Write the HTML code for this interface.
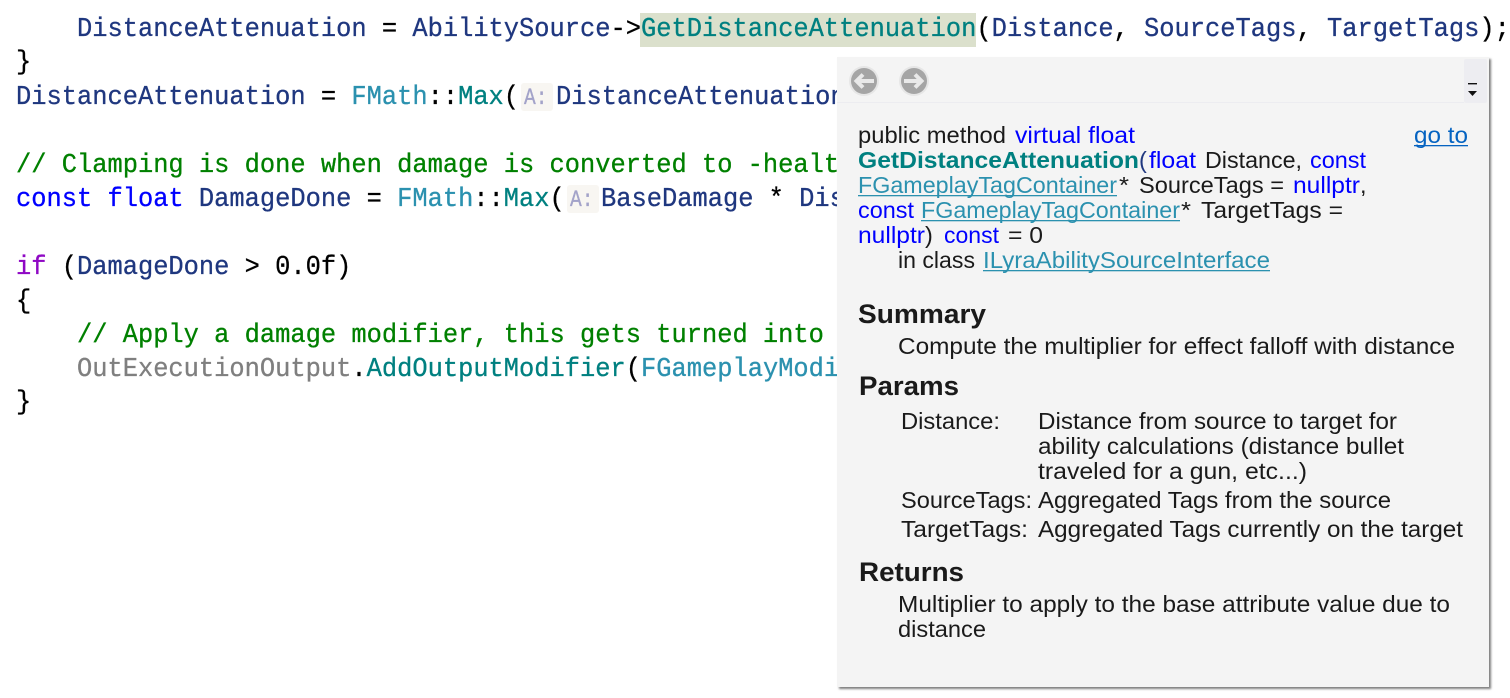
<!DOCTYPE html>
<html><head><meta charset="utf-8"><style>
html,body{margin:0;padding:0;width:1510px;height:698px;overflow:hidden;background:#fff}
.c{position:absolute;font:27px/34px "Liberation Mono",monospace;white-space:pre;transform:scaleX(.9408);transform-origin:0 0;color:#000;-webkit-text-stroke:.3px currentColor}
.n{color:#1f377f}.m{color:#008080}.t{color:#2b91af}.g{color:#008000}.b{color:#0000ff}.p{color:#8f08c4}.o{color:#7f7f7f}
.h{position:absolute;background:#f8f6f2;border-radius:3px;width:32px;height:28px}
.h span{position:absolute;left:3px;top:3px;font:bold 23px/24px "Liberation Mono",monospace;font-weight:normal;color:#a3a3c9;transform:scaleX(.85);transform-origin:0 0;-webkit-text-stroke:.3px #a3a3c9}
#hl{position:absolute;left:640px;top:13px;width:336px;height:34px;background:#dbe0cc}
#pop{position:absolute;left:837px;top:57px;width:652px;height:630px;background:#f4f4f4;box-shadow:2px 2px 2px #7f7f7f}
svg{position:absolute;left:0;top:0}
svg text{font-family:"Liberation Sans",sans-serif;font-size:23.5px;fill:#1a1a1a;white-space:pre}
.bl{fill:#0000ff}.li{fill:#2b91af}.lk{fill:#0563c1}
.hd{font-size:27px;font-weight:bold}
</style></head><body>
<div id="hl"></div>
<div class="c" style="left:16px;top:13px"><span>    </span><span class="n">DistanceAttenuation</span> = <span class="n">AbilitySource</span>-&gt;<span class="m">GetDistanceAttenuation</span>(<span class="n">Distance</span>, <span class="n">SourceTags</span>, <span class="n">TargetTags</span>);</div>
<div class="c" style="left:16px;top:46px">}</div>
<div class="c" style="left:16px;top:81px"><span class="n">DistanceAttenuation</span> = <span class="t">FMath</span>::<span class="m">Max</span>(</div>
<div class="h" style="left:521px;top:83px"><span>A:</span></div>
<div class="c n" style="left:556px;top:81px">DistanceAttenuation, 0.0f);</div>
<div class="c g" style="left:16px;top:149px">// Clamping is done when damage is converted to -health</div>
<div class="c" style="left:16px;top:183px"><span class="b">const</span> <span class="b">float</span> <span class="n">DamageDone</span> = <span class="t">FMath</span>::<span class="m">Max</span>(</div>
<div class="h" style="left:567px;top:185px"><span>A:</span></div>
<div class="c n" style="left:601px;top:183px">BaseDamage <span style="color:#000">*</span> Distance</div>
<div class="c" style="left:16px;top:251px"><span class="p">if</span> (<span class="n">DamageDone</span> &gt; 0.0f)</div>
<div class="c" style="left:16px;top:285px">{</div>
<div class="c g" style="left:16px;top:319px">    // Apply a damage modifier, this gets turned into -health</div>
<div class="c" style="left:16px;top:353px">    <span class="o">OutExecutionOutput</span>.<span class="m">AddOutputModifier</span>(<span class="t">FGameplayModifierEvaluatedData</span></div>
<div class="c" style="left:16px;top:386px">}</div>
<div id="pop"></div>
<svg width="1510" height="698" viewBox="0 0 1510 698">
<rect x="837" y="102" width="627" height="1" fill="#ececf0"/>
<rect x="1464" y="59" width="23" height="44" rx="2" fill="#ededf1"/>
<rect x="1468" y="83" width="9" height="1.4" fill="#111"/>
<path d="M1468 91h9l-4.5 5z" fill="#111"/>
<circle cx="864" cy="81" r="15" fill="#e6e6e6"/><circle cx="864" cy="81" r="13" fill="#a5a5a5"/>
<path d="M874 81H857M863 74.5L856.5 81L863 87.5" fill="none" stroke="#e9e9e9" stroke-width="4"/>
<circle cx="914" cy="81" r="15" fill="#e6e6e6"/><circle cx="914" cy="81" r="13" fill="#a5a5a5"/>
<path d="M904 81H921M915 74.5L921.5 81L915 87.5" fill="none" stroke="#e9e9e9" stroke-width="4"/>

<text x="858" y="143" textLength="148" lengthAdjust="spacingAndGlyphs">public method</text>
<text x="1015" y="143" textLength="120" lengthAdjust="spacingAndGlyphs" class="bl">virtual float</text>
<text x="1414" y="143" textLength="54" lengthAdjust="spacingAndGlyphs" class="lk">go to</text>
<rect x="1414" y="145" width="54" height="1.3" fill="#0563c1"/>

<text x="858" y="168" textLength="281" lengthAdjust="spacingAndGlyphs" style="font-weight:bold;fill:#008080">GetDistanceAttenuation</text>
<text x="1139" y="168" class="bl" style="fill:#1f377f">(</text>
<text x="1149" y="168" textLength="47" lengthAdjust="spacingAndGlyphs" class="bl">float</text>
<text x="1205" y="168" textLength="97" lengthAdjust="spacingAndGlyphs">Distance,</text>
<text x="1310" y="168" textLength="56" lengthAdjust="spacingAndGlyphs" class="bl">const</text>

<text x="858" y="193" textLength="259" lengthAdjust="spacingAndGlyphs" class="li">FGameplayTagContainer</text>
<rect x="858" y="195" width="259" height="1.3" fill="#2b91af"/>
<text x="1119" y="193" textLength="10" lengthAdjust="spacingAndGlyphs">*</text>
<text x="1139" y="193" textLength="145" lengthAdjust="spacingAndGlyphs">SourceTags =</text>
<text x="1293" y="193" textLength="67" lengthAdjust="spacingAndGlyphs" class="bl">nullptr</text>
<text x="1360" y="193">,</text>

<text x="858" y="218" textLength="56" lengthAdjust="spacingAndGlyphs" class="bl">const</text>
<text x="921" y="218" textLength="259" lengthAdjust="spacingAndGlyphs" class="li">FGameplayTagContainer</text>
<rect x="921" y="220" width="259" height="1.3" fill="#2b91af"/>
<text x="1181" y="218" textLength="10" lengthAdjust="spacingAndGlyphs">*</text>
<text x="1201" y="218" textLength="142" lengthAdjust="spacingAndGlyphs">TargetTags =</text>

<text x="858" y="243" textLength="67" lengthAdjust="spacingAndGlyphs" class="bl">nullptr</text>
<text x="925" y="243">)</text>
<text x="944" y="243" textLength="55" lengthAdjust="spacingAndGlyphs" class="bl">const</text>
<text x="1008" y="243" textLength="35" lengthAdjust="spacingAndGlyphs">= 0</text>

<text x="898" y="268" textLength="77" lengthAdjust="spacingAndGlyphs">in class</text>
<text x="983" y="268" textLength="287" lengthAdjust="spacingAndGlyphs" class="li">ILyraAbilitySourceInterface</text>
<rect x="983" y="270" width="287" height="1.3" fill="#2b91af"/>

<text x="858" y="323" textLength="128" lengthAdjust="spacingAndGlyphs" class="hd">Summary</text>
<text x="898" y="354" textLength="557" lengthAdjust="spacingAndGlyphs">Compute the multiplier for effect falloff with distance</text>
<text x="859" y="395" textLength="100" lengthAdjust="spacingAndGlyphs" class="hd">Params</text>
<text x="901" y="429" textLength="99" lengthAdjust="spacingAndGlyphs">Distance:</text>
<text x="1038" y="429" textLength="359" lengthAdjust="spacingAndGlyphs">Distance from source to target for</text>
<text x="1038" y="454" textLength="366" lengthAdjust="spacingAndGlyphs">ability calculations (distance bullet</text>
<text x="1038" y="479" textLength="269" lengthAdjust="spacingAndGlyphs">traveled for a gun, etc...)</text>
<text x="901" y="508" textLength="131" lengthAdjust="spacingAndGlyphs">SourceTags:</text>
<text x="1038" y="508" textLength="353" lengthAdjust="spacingAndGlyphs">Aggregated Tags from the source</text>
<text x="901" y="537" textLength="127" lengthAdjust="spacingAndGlyphs">TargetTags:</text>
<text x="1038" y="537" textLength="425" lengthAdjust="spacingAndGlyphs">Aggregated Tags currently on the target</text>
<text x="859" y="581" textLength="105" lengthAdjust="spacingAndGlyphs" class="hd">Returns</text>
<text x="898" y="612" textLength="552" lengthAdjust="spacingAndGlyphs">Multiplier to apply to the base attribute value due to</text>
<text x="898" y="637" textLength="88" lengthAdjust="spacingAndGlyphs">distance</text>
</svg>
</body></html>
